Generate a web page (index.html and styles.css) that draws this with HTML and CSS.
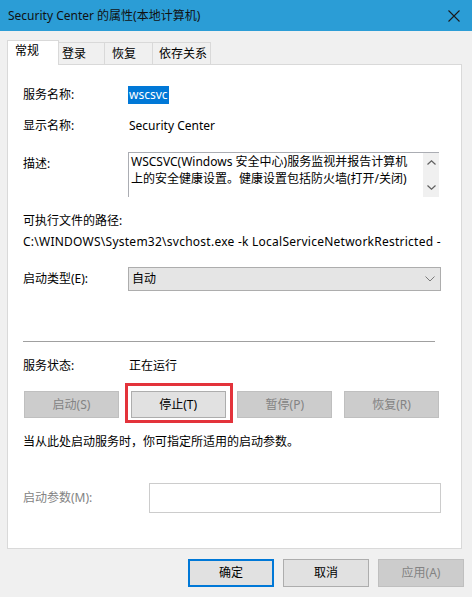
FILE: index.html
```html
<!DOCTYPE html>
<html lang="zh-CN">
<head>
<meta charset="utf-8">
<title>Security Center 的属性(本地计算机)</title>
<link rel="stylesheet" href="styles.css">
</head>
<body>
<div class="window">
  <div class="titlebar">
    <span class="title">Security Center 的属性(本地计算机)</span>
    <svg class="close" width="12" height="12" viewBox="0 0 12 12"><path d="M0.5 0.5L11.5 11.5M11.5 0.5L0.5 11.5" stroke="#1b1b1b" stroke-width="1.1" fill="none"/></svg>
  </div>
  <div class="client">
    <div class="tabs">
      <div class="tab active t1">常规</div>
      <div class="tab t2">登录</div>
      <div class="tab t3">恢复</div>
      <div class="tab t4">依存关系</div>
    </div>
    <div class="panel">
      <div class="row r1"><span class="label">服务名称:</span><span class="selected">wscsvc</span></div>
      <div class="row r2"><span class="label">显示名称:</span><span class="value">Security Center</span></div>
      <div class="row r3">
        <span class="label top">描述:</span>
        <div class="desc">
          <div class="desc-text">WSCSVC(Windows 安全中心)服务监视并报告计算机<br>上的安全健康设置。健康设置包括防火墙(打开/关闭)</div>
          <div class="scroll">
            <svg width="9" height="5" viewBox="0 0 9 5"><path d="M0.5 4.5L4.5 0.8L8.5 4.5" stroke="#606060" stroke-width="1.2" fill="none"/></svg>
            <svg width="9" height="5" viewBox="0 0 9 5"><path d="M0.5 0.5L4.5 4.2L8.5 0.5" stroke="#606060" stroke-width="1.2" fill="none"/></svg>
          </div>
        </div>
      </div>
      <div class="row r4"><span class="label wide">可执行文件的路径:</span></div>
      <div class="row r5"><span class="path">C:\WINDOWS\System32\svchost.exe -k LocalServiceNetworkRestricted -p</span></div>
      <div class="row r6">
        <span class="label">启动类型(E):</span>
        <div class="select"><span>自动</span>
          <svg width="10" height="6" viewBox="0 0 10 6"><path d="M0.5 0.5L5 5L9.5 0.5" stroke="#7a7a7a" stroke-width="1" fill="none"/></svg>
        </div>
      </div>
      <div class="separator"></div>
      <div class="row r7"><span class="label">服务状态:</span><span class="value">正在运行</span></div>
      <div class="buttons">
        <div class="btn disabled">启动(S)</div>
        <div class="btn-wrap">
          <div class="btn">停止(T)</div>
          <div class="mark"></div>
        </div>
        <div class="btn disabled">暂停(P)</div>
        <div class="btn disabled">恢复(R)</div>
      </div>
      <div class="row r8"><span class="hint">当从此处启动服务时，你可指定所适用的启动参数。</span></div>
      <div class="row r9"><span class="label param disabled-text">启动参数(M):</span><div class="input"></div></div>
    </div>
    <div class="footer">
      <div class="btn fbtn default">确定</div>
      <div class="btn fbtn">取消</div>
      <div class="btn fbtn disabled">应用(A)</div>
    </div>
  </div>
</div>
</body>
</html>
```
FILE: styles.css
```css
html, body {
  margin: 0;
  padding: 0;
  background: #f0f0f0;
}
body {
  font-family: "Noto Sans", "Noto Sans CJK SC", sans-serif;
  font-size: 12px;
  line-height: 18px;
  color: #000;
}
.window {
  width: 472px;
  height: 597px;
  background: #f0f0f0;
  overflow: hidden;
  display: flex;
  flex-direction: column;
}
.titlebar {
  height: 31px;
  flex: none;
  background: #2b9dd6;
  display: flex;
  align-items: center;
  padding-left: 8px;
}
.title {
  color: #111;
  font-size: 12px;
  white-space: nowrap;
}
.close {
  margin-left: auto;
  margin-right: 12px;
}
.client {
  padding: 9px 10px 0 7px;
}
.tabs {
  display: flex;
  align-items: flex-end;
  height: 24px;
}
.tab {
  box-sizing: border-box;
  height: 22px;
  border: 1px solid #d9d9d9;
  border-bottom: none;
  border-left: none;
  background: #f0f0f0;
  padding-top: 2px;
  line-height: 18px;
  white-space: nowrap;
}
.tab.active {
  height: 25px;
  margin-bottom: -1px;
  position: relative;
  z-index: 1;
  background: #fff;
  border-left: 1px solid #d9d9d9;
  padding-top: 1px;
}
.t1 { width: 52px; padding-left: 7px; }
.t2 { width: 46px; padding-left: 3px; }
.t3 { width: 48px; padding-left: 7px; }
.t4 { width: 58px; padding-left: 6px; }
.panel {
  box-sizing: border-box;
  height: 485px;
  background: #fff;
  border: 1px solid #d9d9d9;
  padding: 21px 0 0 15px;
}
.row {
  display: flex;
  align-items: center;
  height: 18px;
}
.label {
  width: 105px;
  flex: none;
  white-space: nowrap;
}
.label.wide { width: auto; }
.label.top { align-self: flex-start; margin-top: 3px; }
.selected {
  background: #0078d7;
  color: #fff;
  padding: 0 1px;
  height: 18px;
}
.value { white-space: nowrap; padding-left: 1px; }
.r2 { margin-top: 13px; }
.r3 { margin-top: 17px; height: 45px; align-items: flex-start; }
.desc {
  box-sizing: border-box;
  width: 311px;
  height: 45px;
  border-top: 1px solid #abadb3;
  border-left: 1px solid #abadb3;
  display: flex;
}
.desc-text {
  flex: 1;
  padding-left: 2px;
  line-height: 17px;
  white-space: nowrap;
  overflow: hidden;
}
.scroll {
  width: 16px;
  flex: none;
  background: #f0f0f0;
  display: flex;
  flex-direction: column;
  align-items: center;
  justify-content: space-between;
  padding: 7px 0 7px;
  box-sizing: border-box;
}
.r4 { margin-top: 15px; }
.r5 { margin-top: 3px; }
.path {
  width: 418px;
  white-space: nowrap;
  overflow: hidden;
  letter-spacing: 0.25px;
}
.r6 { margin-top: 16px; height: 24px; }
.select {
  box-sizing: border-box;
  width: 313px;
  height: 24px;
  background: #e5e5e5;
  border: 1px solid #adadad;
  display: flex;
  align-items: center;
  justify-content: space-between;
  padding: 0 5px 0 3px;
}
.separator {
  margin-top: 50px;
  width: 412px;
  height: 1px;
  background: #a0a0a0;
}
.r7 { margin-top: 15px; }
.buttons {
  margin-top: 16px;
  margin-left: 1px;
  width: 415px;
  display: flex;
  justify-content: space-between;
}
.btn {
  box-sizing: border-box;
  width: 95px;
  height: 27px;
  background: #e1e1e1;
  border: 1px solid #adadad;
  display: flex;
  align-items: center;
  justify-content: center;
  white-space: nowrap;
}
.btn.disabled {
  background: #cccccc;
  border-color: #bfbfbf;
  color: #838383;
}
.btn-wrap {
  position: relative;
}
.mark {
  position: absolute;
  left: -6px;
  right: -7px;
  top: -8px;
  bottom: -5px;
  border: 3px solid #e3333b;
}
.r8 { margin-top: 15px; }
.hint { white-space: nowrap; }
.r9 { margin-top: 32px; height: 30px; }
.label.param { width: 126px; }
.disabled-text { color: #838383; }
.input {
  box-sizing: border-box;
  width: 292px;
  height: 30px;
  border: 1px solid #cccccc;
  background: #fff;
}
.footer {
  margin-top: 10px;
  margin-right: -2px;
  display: flex;
  justify-content: flex-end;
  gap: 9px;
}
.fbtn {
  width: 86px;
  height: 28px;
}
.fbtn.default {
  border: 2px solid #0078d7;
}
```
